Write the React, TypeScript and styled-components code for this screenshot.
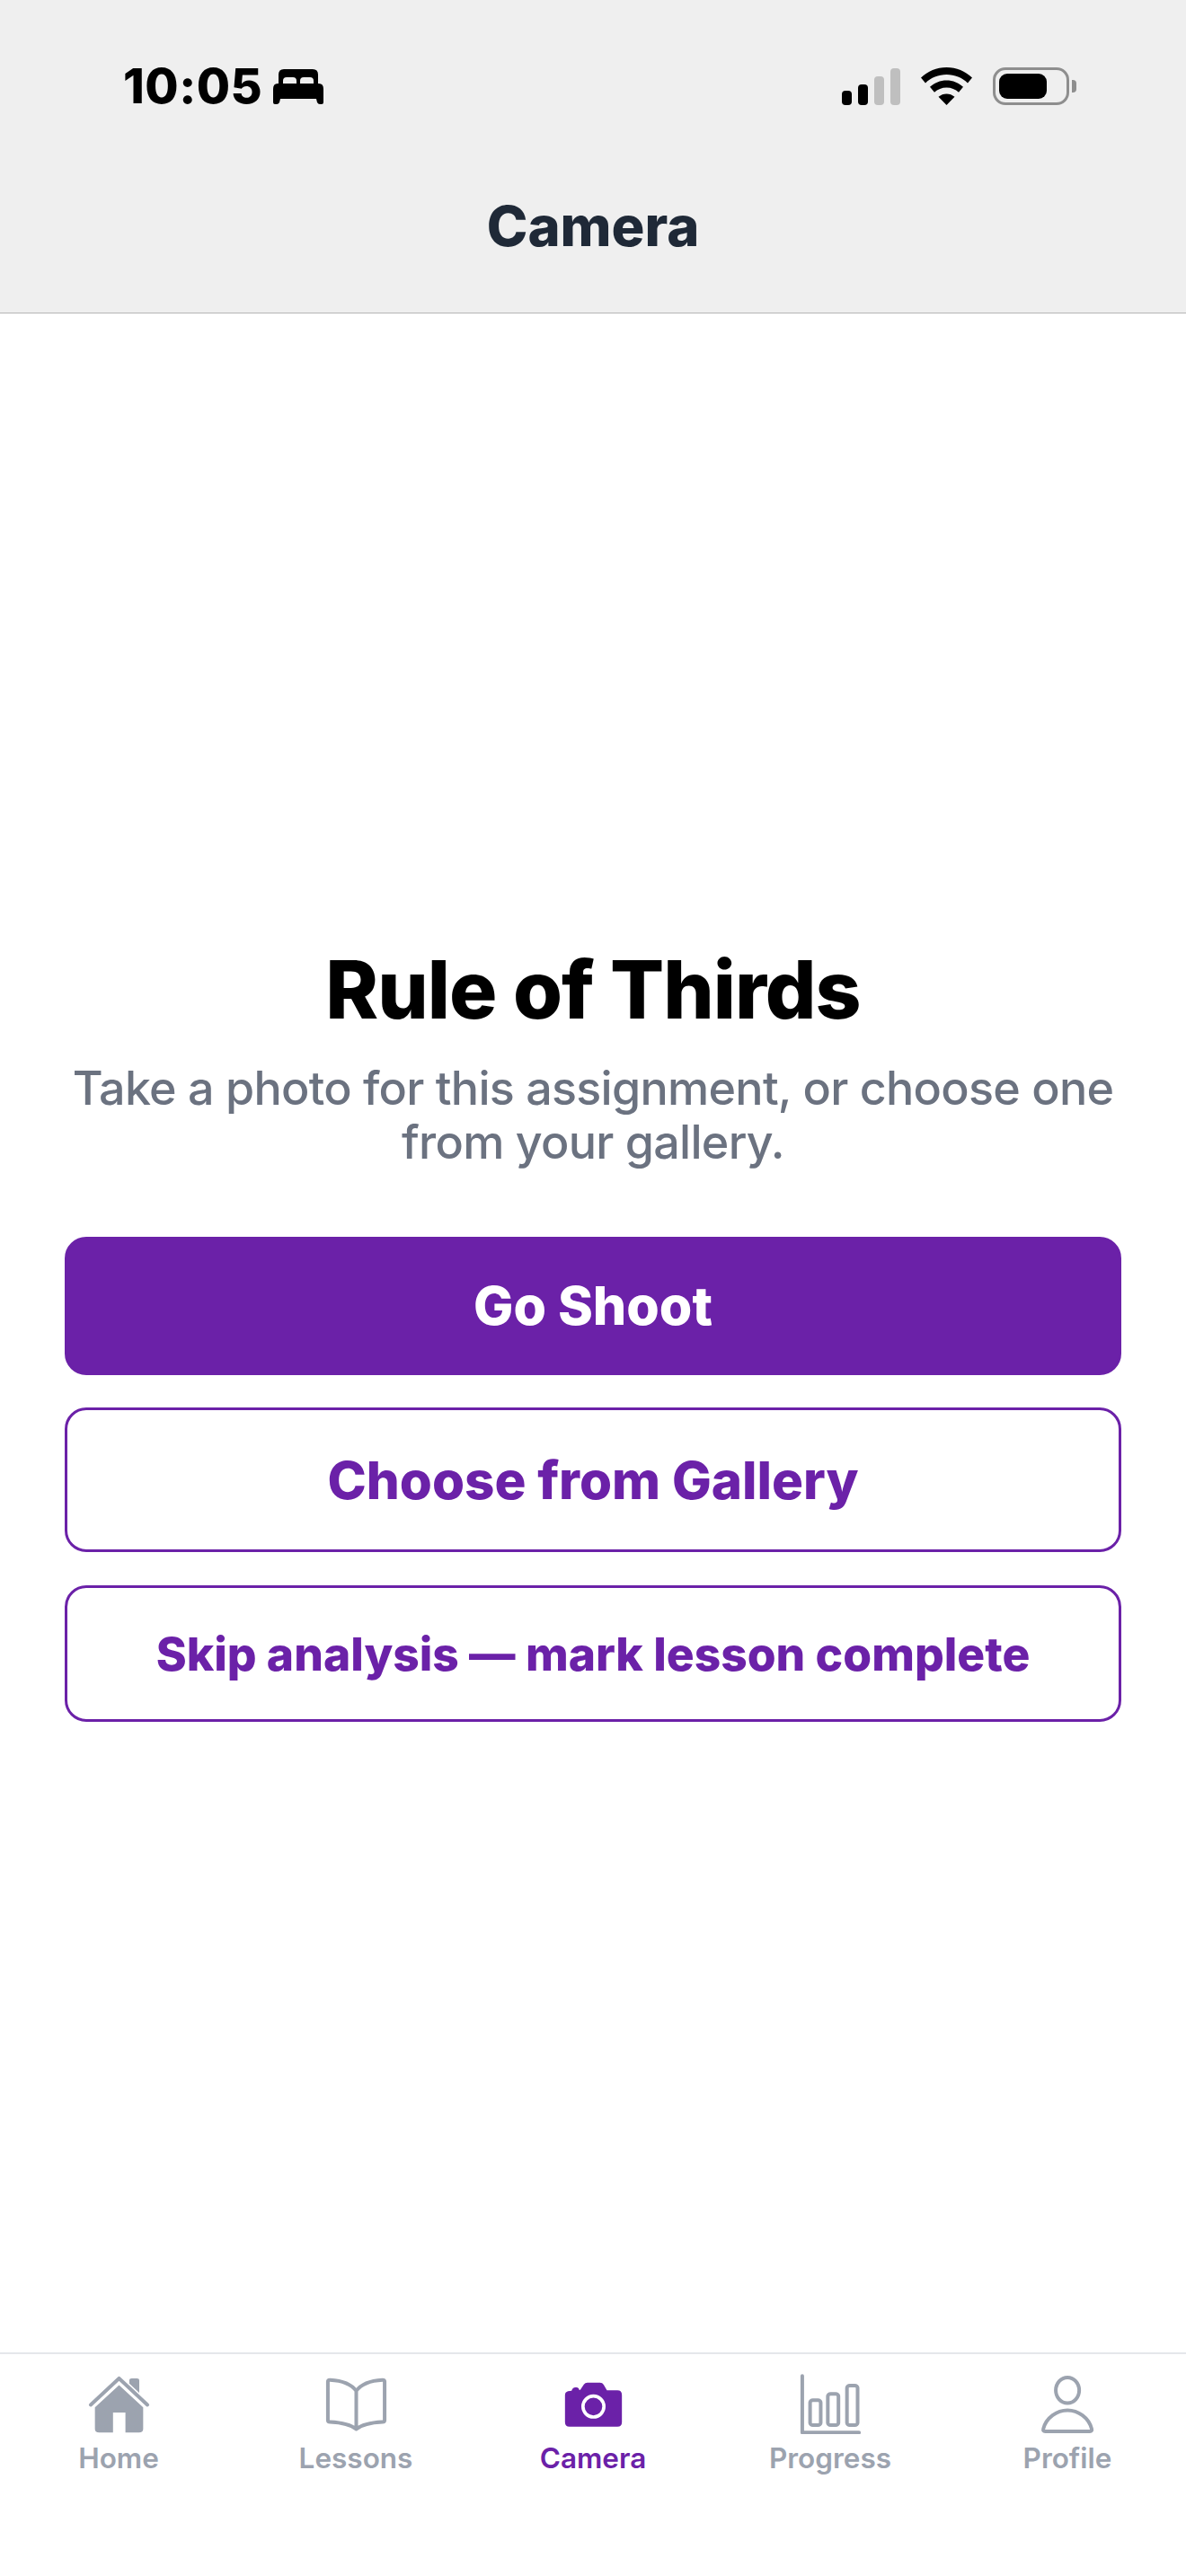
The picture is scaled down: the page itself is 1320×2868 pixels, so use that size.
import React from 'react';
import styled, { createGlobalStyle } from 'styled-components';

const PURPLE = '#6b21a8';
const GREY = '#9ca3af';

const GlobalStyle = createGlobalStyle`
  html, body {
    margin: 0;
    padding: 0;
    background: #fff;
  }
  * { box-sizing: border-box; }
  body { font-family: Inter, "Liberation Sans", sans-serif; }
`;

const Screen = styled.div`
  width: 1320px;
  height: 2868px;
  display: flex;
  flex-direction: column;
  background: #fff;
  overflow: hidden;
`;

const Header = styled.header`
  height: 349px;
  background: #efefef;
  border-bottom: 1px solid #b4b4b4;
  display: flex;
  flex-direction: column;
`;

const StatusBar = styled.div`
  height: 42px;
  margin: 75px 122px 0 137px;
  display: flex;
  align-items: center;
  justify-content: space-between;
`;

const Clock = styled.div`
  display: flex;
  align-items: center;
  gap: 12px;
  font-size: 54px;
  font-weight: 800;
  letter-spacing: 0.5px;
  color: #000;
  line-height: 42px;
`;

const StatusIcons = styled.div`
  display: flex;
  align-items: flex-end;
  gap: 23px;
`;

const Signal = styled.div`
  display: flex;
  align-items: flex-end;
  gap: 7px;
  height: 41px;
`;

const SignalBar = styled.span<{ $h: number; $on?: boolean }>`
  width: 11px;
  height: ${p => p.$h}px;
  border-radius: 4px;
  background: ${p => (p.$on ? '#000' : '#bfbfbf')};
`;

const Battery = styled.div`
  display: flex;
  align-items: center;
  gap: 3px;
`;

const BatteryShell = styled.div`
  width: 85px;
  height: 42px;
  border: 3px solid #8e8e8e;
  border-radius: 14px;
  padding: 4px;
`;

const BatteryFill = styled.div`
  width: 53px;
  height: 28px;
  background: #000;
  border-radius: 9px;
`;

const BatteryCap = styled.span`
  width: 5px;
  height: 14px;
  background: #8e8e8e;
  border-radius: 0 4px 4px 0;
`;

const HeaderTitle = styled.h1`
  margin: 100px 0 0;
  text-align: center;
  font-size: 61.5px;
  line-height: 70px;
  font-weight: 800;
  color: #1f2937;
`;

const Main = styled.main`
  flex: 1;
  display: flex;
  flex-direction: column;
  justify-content: center;
  padding: 0 72px;
`;

const Title = styled.h2`
  margin: 0 0 30px;
  text-align: center;
  font-size: 89px;
  line-height: 100px;
  font-weight: 800;
  letter-spacing: -1px;
  color: #000;
`;

const Subtitle = styled.p`
  margin: 0 0 75px;
  text-align: center;
  font-size: 52px;
  line-height: 60px;
  font-weight: 550;
  letter-spacing: -0.72px;
  color: #6b7280;
`;

const Actions = styled.div`
  display: flex;
  flex-direction: column;
  gap: 36.5px;
`;

const Button = styled.button<{ $h: number; $solid?: boolean; $fs: number }>`
  height: ${p => p.$h}px;
  width: 100%;
  border-radius: 24px;
  border: 3px solid ${PURPLE};
  background: ${p => (p.$solid ? PURPLE : '#fff')};
  color: ${p => (p.$solid ? '#fff' : PURPLE)};
  font-family: inherit;
  font-size: ${p => p.$fs}px;
  font-weight: 800;
  padding: 0;
`;

const TabBar = styled.nav`
  height: 249px;
  border-top: 2px solid #e5e7eb;
  padding-top: 21px;
  display: grid;
  grid-template-columns: repeat(5, 1fr);
  background: #fff;
`;

const Tab = styled.div<{ $active?: boolean }>`
  display: flex;
  flex-direction: column;
  align-items: center;
  gap: 7px;
  color: ${p => (p.$active ? PURPLE : GREY)};
  font-size: 31.5px;
  line-height: 40px;
  font-weight: 600;
  svg { display: block; }
`;

// the line icons keep one stroke width although the drawing is squeezed to fit
const TabSvg = styled.svg.attrs({ preserveAspectRatio: 'none' })`
  width: 75px;
  height: 68px;

  .line {
    fill: none;
    stroke: ${GREY};
    stroke-width: 4px;
    stroke-linecap: round;
    stroke-linejoin: round;
    vector-effect: non-scaling-stroke;
  }
`;

const BedIcon = () => (
  <svg width="56" height="39" viewBox="0 0 56 39" fill="#000">
    <path d="M6 16V6q0-6 6-6h32q6 0 6 6v10h-5v-3q0-4-4-4H34q-4 0-4 4v3h-4v-3q0-4-4-4H15q-4 0-4 4v3z" />
    <path d="M5 16h46q5 0 5 6v15q0 2-2 2h-2q-2 0-3-2l-1-4H8l-1 4q-1 2-3 2H2q-2 0-2-2V22q0-6 5-6z" />
  </svg>
);

const WifiIcon = () => (
  <svg width="57" height="42" viewBox="0 0 57 42" fill="#000">
    <path d="M28.5 0C17.5 0 7.5 4.300 0 11.500l5 6C11 11.500 19.500 8 28.500 8s17.500 3.500 23.500 9.500l5-6C49.500 4.300 39.500 0 28.500 0z" />
    <path d="M28.500 14.500c-7 0-13.500 2.700-18.500 7.300l5 6c3.500-3.300 8.300-5.300 13.500-5.300s10 2 13.500 5.300l5-6c-5-4.600-11.500-7.300-18.500-7.300z" />
    <path d="M28.500 29.500c-3.300 0-6.400 1.200-9 3.300L28.500 42l9-9.200c-2.600-2.100-5.700-3.300-9-3.300z" />
  </svg>
);

const HomeIcon = () => (
  <TabSvg viewBox="138 125 190 205">
    <path d="M262 195V150q0-7 7-7h14q7 0 7 7v60z" fill={GREY} />
    <path d="M153 232L233 143L313 232" fill="#fff" stroke="#fff" strokeWidth="20" />
    <path className="line" d="M153 232L233 143L313 232" />
    <path d="M233 166L301 240V313q0 12-12 12H251V258H216V325H177q-12 0-12-12V240z" fill={GREY} />
  </TabSvg>
);

const BookIcon = () => (
  <TabSvg viewBox="805 125 190 205">
    <path className="line" d="M900 185C885 160 858 150 826 148Q820 148 820 154V283Q820 289 826 289C860 291 885 298 900 313C915 298 940 291 974 289Q980 289 980 283V154Q980 148 974 148C942 150 915 160 900 185V313" />
  </TabSvg>
);

const CameraIcon = () => (
  <TabSvg viewBox="97.500 36 225 204">
    <path
      d="M125 97L137 95Q140 85 150 84H155Q162 85 163 93L166 92L178 74Q182 68 190 68H232Q240 68 244 75L255 94H290Q305 94 305 110V200Q305 215 290 215H130Q115 215 115 200V110Q115 100 125 97Z"
      fill={PURPLE}
    />
    <circle cx="210" cy="148" r="35" fill={PURPLE} stroke="#fff" strokeWidth="11" />
  </TabSvg>
);

const ProgressIcon = () => (
  <TabSvg viewBox="573 125 190 205">
    <path className="line" d="M588 135V325H748" />
    <rect className="line" x="610" y="216" width="30" height="84" rx="8" />
    <rect className="line" x="660" y="195" width="30" height="105" rx="8" />
    <rect className="line" x="714" y="167" width="30" height="133" rx="8" />
  </TabSvg>
);

const ProfileIcon = () => (
  <TabSvg viewBox="1241 125 190 205">
    <ellipse className="line" cx="1335" cy="183" rx="33" ry="43" />
    <path className="line" d="M1272 321H1398Q1405 321 1403 312C1395 275 1365 250 1335 250C1305 250 1275 275 1267 312Q1265 321 1272 321Z" />
  </TabSvg>
);

const tabs = [
  { label: 'Home', icon: <HomeIcon /> },
  { label: 'Lessons', icon: <BookIcon /> },
  { label: 'Camera', icon: <CameraIcon />, active: true },
  { label: 'Progress', icon: <ProgressIcon /> },
  { label: 'Profile', icon: <ProfileIcon /> },
];

const App: React.FC = () => (
  <Screen>
    <GlobalStyle />
    <Header>
      <StatusBar>
        <Clock>
          10:05
          <BedIcon />
        </Clock>
        <StatusIcons>
          <Signal>
            <SignalBar $h={16} $on />
            <SignalBar $h={23} $on />
            <SignalBar $h={32} />
            <SignalBar $h={41} />
          </Signal>
          <WifiIcon />
          <Battery>
            <BatteryShell>
              <BatteryFill />
            </BatteryShell>
            <BatteryCap />
          </Battery>
        </StatusIcons>
      </StatusBar>
      <HeaderTitle>Camera</HeaderTitle>
    </Header>

    <Main>
      <Title>Rule of Thirds</Title>
      <Subtitle>Take a photo for this assignment, or choose one from your gallery.</Subtitle>
      <Actions>
        <Button $solid $h={154} $fs={59}>Go Shoot</Button>
        <Button $h={161} $fs={58.3}>Choose from Gallery</Button>
        <Button $h={152} $fs={51.5}>Skip analysis — mark lesson complete</Button>
      </Actions>
    </Main>

    <TabBar>
      {tabs.map(t => (
        <Tab key={t.label} $active={t.active}>
          {t.icon}
          {t.label}
        </Tab>
      ))}
    </TabBar>
  </Screen>
);

export default App;
